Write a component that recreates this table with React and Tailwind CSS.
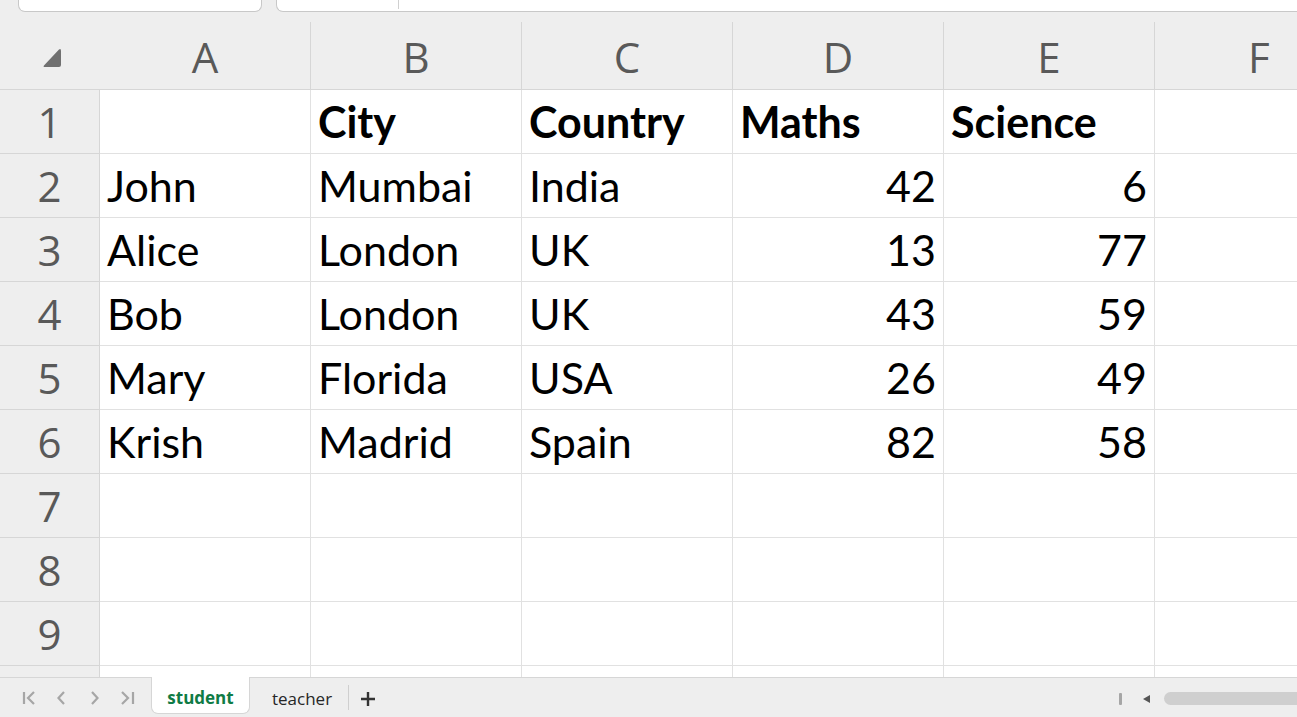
import React from "react";

const COLS = ["A", "B", "C", "D", "E"];

const ROWS = [
  ["", "City", "Country", "Maths", "Science"],
  ["John", "Mumbai", "India", "42", "6"],
  ["Alice", "London", "UK", "13", "77"],
  ["Bob", "London", "UK", "43", "59"],
  ["Mary", "Florida", "USA", "26", "49"],
  ["Krish", "Madrid", "Spain", "82", "58"],
  ["", "", "", "", ""],
  ["", "", "", "", ""],
  ["", "", "", "", ""],
  ["", "", "", "", ""],
];

const cellFont = { fontFamily: "Lato, 'Liberation Sans', sans-serif" };
const headFont = { fontFamily: "'Open Sans', 'Noto Sans', sans-serif" };

function TopBar() {
  return (
    <div className="h-[12px] shrink-0 flex items-start">
      <div className="ml-[18px] w-[244px] h-[12px] bg-white border border-t-0 border-[#c8c8c8] rounded-b-[7px]" />
      <div className="ml-[14px] flex-1 h-[12px] bg-white border border-t-0 border-r-0 border-[#c8c8c8] rounded-bl-[7px] relative">
        <div className="absolute left-[121px] top-0 h-[9px] w-px bg-[#d0d0d0]" />
      </div>
    </div>
  );
}

function HeaderRow() {
  return (
    <div className="h-[78px] shrink-0 flex border-b border-[#d6d6d6]" style={headFont}>
      <div className="w-[100px] shrink-0 relative">
        <svg className="absolute left-[41px] top-[36px]" width="22" height="22" viewBox="0 0 22 22">
          <path d="M18 1.5 Q20 0 20 3 L20 17 Q20 19 18 19 L4 19 Q1.5 19 3.2 17.2 Z" fill="#707070" />
        </svg>
      </div>
      {COLS.map((c) => (
        <div key={c} className="w-[211px] shrink-0 flex flex-col pt-[10px]">
          <div className="flex-1 border-r border-[#d6d6d6] flex items-end justify-center pb-[11px] text-[42px] leading-none text-[#595959]">
            {c}
          </div>
        </div>
      ))}
      <div className="flex-1 flex items-end pb-[11px] pl-[93px] text-[42px] leading-none text-[#595959]">F</div>
    </div>
  );
}

function DataRow({ n, cells, label }) {
  const isHeader = n === 1;
  return (
    <div className="h-[64px] shrink-0 flex">
      <div
        className="w-[100px] shrink-0 border-r border-b border-[#d6d6d6] flex items-end justify-center pb-[10px] text-[42px] leading-none text-[#595959]"
        style={headFont}
      >
        {label ? n : ""}
      </div>
      {cells.map((v, i) => {
        const numeric = !isHeader && (i === 3 || i === 4);
        return (
          <div
            key={i}
            className={`w-[211px] shrink-0 bg-white border-r border-b border-[#e1e1e1] flex items-end pb-[10px] px-[7px] text-[43px] leading-none text-black ${
              numeric ? "justify-end" : "justify-start"
            } ${isHeader ? "font-bold" : ""}`}
            style={cellFont}
          >
            {v}
          </div>
        );
      })}
      <div className="flex-1 bg-white border-b border-[#e1e1e1]" />
    </div>
  );
}

function TabBar() {
  return (
    <div className="h-[40px] shrink-0 border-t border-[#d6d6d6] bg-[#eeeeee] flex items-start relative">
      <div className="flex items-center h-[39px] pl-[22px] gap-0">
        <svg width="14" height="16" viewBox="0 0 14 16" className="mr-[20px]">
          <path d="M2 2 V14" stroke="#a6a6a6" strokeWidth="2.2" />
          <path d="M12 2 L6 8 L12 14" stroke="#a6a6a6" strokeWidth="2.2" fill="none" />
        </svg>
        <svg width="10" height="16" viewBox="0 0 10 16" className="mr-[24px]">
          <path d="M8 2 L2.5 8 L8 14" stroke="#a6a6a6" strokeWidth="2.2" fill="none" />
        </svg>
        <svg width="10" height="16" viewBox="0 0 10 16" className="mr-[20px]">
          <path d="M2 2 L7.5 8 L2 14" stroke="#a6a6a6" strokeWidth="2.2" fill="none" />
        </svg>
        <svg width="16" height="16" viewBox="0 0 16 16">
          <path d="M2 2 L8 8 L2 14" stroke="#a6a6a6" strokeWidth="2.2" fill="none" />
          <path d="M13 2 V14" stroke="#a6a6a6" strokeWidth="2.2" />
        </svg>
      </div>
      <div
        className="ml-[15px] -mt-px w-[99px] h-[37px] pt-[6px] bg-white rounded-b-[7px] border border-t-0 border-[#d6d6d6] flex items-center justify-center text-[17px] font-bold text-[#0f7b45]"
        style={headFont}
      >
        student
      </div>
      <div className="ml-[22px] h-[39px] pt-[2px] flex items-center text-[17px] text-[#262626]" style={headFont}>
        teacher
      </div>
      <div className="ml-[16px] mt-[7px] h-[25px] w-px bg-[#cfcfcf]" />
      <div className="ml-[11px] h-[39px] pt-[2px] flex items-center">
        <svg width="16" height="16" viewBox="0 0 16 16">
          <path d="M8 1 V15 M1 8 H15" stroke="#333" strokeWidth="2.4" />
        </svg>
      </div>
      <div className="ml-auto h-[39px] pt-[2px] flex items-center">
        <div className="w-[3px] h-[12px] bg-[#a6a6a6] rounded-[1px]" />
        <svg width="10" height="10" viewBox="0 0 10 10" className="ml-[20px]">
          <path d="M1 5 L8 1 L8 9 Z" fill="#555" />
        </svg>
        <div className="ml-[12px] w-[133px] h-[13px] bg-[#cfcfcf] rounded-l-full" />
      </div>
    </div>
  );
}

export default function App() {
  return (
    <div className="w-[1297px] h-[717px] bg-[#eeeeee] overflow-hidden flex flex-col">
      <TopBar />
      <HeaderRow />
      <div className="flex-1 overflow-hidden flex flex-col">
        {ROWS.map((r, i) => (
          <DataRow key={i} n={i + 1} cells={r} label={i < 9} />
        ))}
      </div>
      <TabBar />
    </div>
  );
}
